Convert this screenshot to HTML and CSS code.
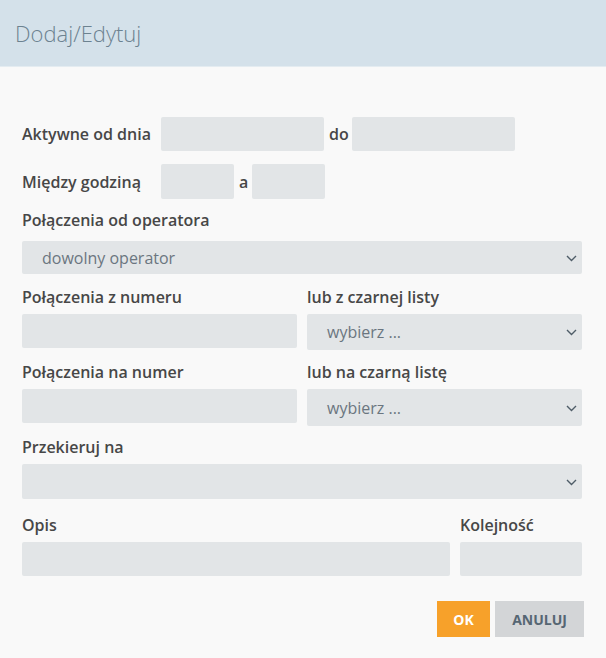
FILE: index.html
```html
<!DOCTYPE html>
<html lang="pl">
<head>
<meta charset="utf-8">
<title>Dodaj/Edytuj</title>
<link rel="stylesheet" href="styles.css">
</head>
<body>
<div class="modal">
  <div class="modal-header">
    <h1 class="modal-title">Dodaj/Edytuj</h1>
  </div>
  <div class="modal-body">
    <div class="inline-row row-dates">
      <label class="inline-label">Aktywne od dnia</label>
      <div class="field field-date"></div>
      <span class="sep sep-do">do</span>
      <div class="field field-date"></div>
    </div>
    <div class="inline-row row-hours">
      <label class="inline-label">Między godziną</label>
      <div class="field field-time"></div>
      <span class="sep sep-a">a</span>
      <div class="field field-time"></div>
    </div>

    <div class="group g-operator">
      <label class="label">Połączenia od operatora</label>
      <div class="field select h33">
        <span class="select-text">dowolny operator</span>
        <svg class="chev" width="11" height="7" viewBox="0 0 11 7"><path d="M1 1l4.5 4.5L10 1" fill="none" stroke="#4f5d68" stroke-width="1.4"/></svg>
      </div>
    </div>

    <div class="two-col g-from">
      <div class="col">
        <label class="label">Połączenia z numeru</label>
        <div class="field h34"></div>
      </div>
      <div class="col">
        <label class="label">lub z czarnej listy</label>
        <div class="field select h36">
          <span class="select-text">wybierz ...</span>
          <svg class="chev" width="11" height="7" viewBox="0 0 11 7"><path d="M1 1l4.5 4.5L10 1" fill="none" stroke="#4f5d68" stroke-width="1.4"/></svg>
        </div>
      </div>
    </div>

    <div class="two-col g-to">
      <div class="col">
        <label class="label">Połączenia na numer</label>
        <div class="field h34"></div>
      </div>
      <div class="col">
        <label class="label">lub na czarną listę</label>
        <div class="field select h37">
          <span class="select-text">wybierz ...</span>
          <svg class="chev" width="11" height="7" viewBox="0 0 11 7"><path d="M1 1l4.5 4.5L10 1" fill="none" stroke="#4f5d68" stroke-width="1.4"/></svg>
        </div>
      </div>
    </div>

    <div class="group g-redirect">
      <label class="label">Przekieruj na</label>
      <div class="field select h35">
        <span class="select-text"></span>
        <svg class="chev" width="11" height="7" viewBox="0 0 11 7"><path d="M1 1l4.5 4.5L10 1" fill="none" stroke="#4f5d68" stroke-width="1.4"/></svg>
      </div>
    </div>

    <div class="desc-row g-desc">
      <div class="col col-desc">
        <label class="label">Opis</label>
        <div class="field h34"></div>
      </div>
      <div class="col col-order">
        <label class="label">Kolejność</label>
        <div class="field h34"></div>
      </div>
    </div>

    <div class="actions">
      <button class="btn btn-ok">OK</button>
      <button class="btn btn-cancel">ANULUJ</button>
    </div>
  </div>
</div>
</body>
</html>
```
FILE: styles.css
```css
* { box-sizing: border-box; }
html, body { margin: 0; padding: 0; }
body {
  background: #f9f9f9;
  font-family: "Open Sans", "Noto Sans", sans-serif;
  color: #474747;
}
.modal { width: 606px; min-height: 658px; background: #f9f9f9; }
.modal-header {
  height: 67px;
  background: #d4e1ea;
  border-bottom: 1px solid #e4ecf1;
  padding: 0 15px;
  display: flex;
  align-items: center;
}
.modal-title {
  margin: 0;
  font-weight: 300;
  font-size: 22px;
  color: #6c8290;
  line-height: 1;
  padding-bottom: 1px;
}
.modal-body {
  padding: 50px 24px 0 22px;
}
.field {
  background: #e2e5e7;
  border-radius: 2px;
  height: 34px;
}
.label, .inline-label, .sep {
  font-size: 16px;
  font-weight: 600;
  line-height: 22px;
  color: #474747;
  display: block;
}
.inline-row { display: flex; align-items: center; }
.inline-label { width: 139px; flex: none; }
.field-date { width: 163px; }
.field-time { width: 73px; }
.sep-do { margin: 0 5px 0 5px; width: 18px; }
.sep-a { margin: 0 4px 0 5px; width: 9px; }
.row-hours { margin-top: 13px; height: 35px; }
.row-hours .field { height: 35px; }

.label { margin-bottom: 6px; }
.g-operator { margin-top: 10px; }
.g-operator .label { margin-bottom: 10px; }
.select {
  display: flex;
  align-items: center;
  justify-content: space-between;
  padding: 0 5px 0 20px;
}
.select-text { font-size: 16px; color: #6b7680; font-weight: 400; }
.chev { flex: none; margin-top: 1px; }
.h33 { height: 33px; }
.h34 { height: 34px; }
.h35 { height: 35px; }
.h36 { height: 36px; }
.h37 { height: 37px; }

.two-col { display: grid; grid-template-columns: 275px 275px; column-gap: 10px; align-items: start; }
.g-from { margin-top: 12px; }
.g-to { margin-top: 11px; }
.g-redirect { margin-top: 10px; }
.desc-row { display: grid; grid-template-columns: 428px 122px; column-gap: 10px; margin-top: 15px; }

.actions {
  display: flex;
  justify-content: flex-end;
  gap: 5px;
  margin-top: 25px;
  margin-right: -2px;
}
.btn {
  height: 36px;
  border: none;
  border-radius: 0;
  font-family: "Open Sans", "Noto Sans", sans-serif;
  font-weight: 700;
  font-size: 14px;
  padding: 0;
  cursor: pointer;
}
.btn-ok { width: 53px; background: #f7a12a; color: #ffffff; }
.btn-cancel { width: 89px; background: #d3d5d7; color: #566673; }
```
